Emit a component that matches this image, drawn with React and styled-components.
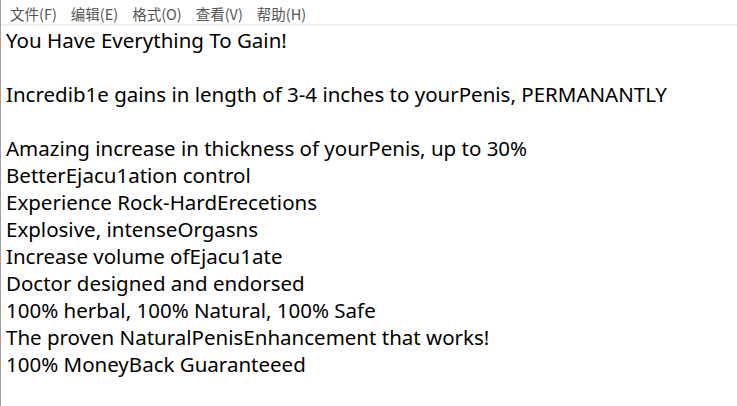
import React from 'react'
import styled, { createGlobalStyle } from 'styled-components'

const GlobalStyle = createGlobalStyle`
  html, body {
    margin: 0;
    padding: 0;
    background: #ffffff;
  }
`

const Window = styled.div`
  width: 737px;
  height: 406px;
  display: flex;
  flex-direction: column;
  background: #ffffff;
  border-left: 1px solid #a0a0a0;
  box-sizing: border-box;
  overflow: hidden;
`

const MenuBar = styled.nav`
  height: 24px;
  display: flex;
  align-items: center;
  padding: 2px 0 0 9px;
  box-sizing: border-box;
  border-bottom: 2px solid #f0f0f0;
  height: 26px;
  font-family: "Noto Sans CJK SC", "Noto Sans", sans-serif;
  font-size: 14.5px;
  color: #555555;
`

const MenuItem = styled.span`
  margin-right: 14px;
  white-space: nowrap;
`

const Editor = styled.div`
  flex: 1;
  padding: 1px 0 0 5px;
  font-family: "Noto Sans", "Open Sans", sans-serif;
  font-size: 20.5px;
  line-height: 27px;
  color: #000000;
  white-space: pre;
`

const Line = styled.div`
  height: 27px;
`

const menu = ['文件(F)', '编辑(E)', '格式(O)', '查看(V)', '帮助(H)']

const lines = [
  'You Have Everything To Gain!',
  '',
  'Incredib1e gains in length of 3-4 inches to yourPenis, PERMANANTLY',
  '',
  'Amazing increase in thickness of yourPenis, up to 30%',
  'BetterEjacu1ation control',
  'Experience Rock-HardErecetions',
  'Explosive, intenseOrgasns',
  'Increase volume ofEjacu1ate',
  'Doctor designed and endorsed',
  '100% herbal, 100% Natural, 100% Safe',
  'The proven NaturalPenisEnhancement that works!',
  '100% MoneyBack Guaranteeed',
]

export default function App() {
  return (
    <>
      <GlobalStyle />
      <Window>
        <MenuBar>
          {menu.map(m => <MenuItem key={m}>{m}</MenuItem>)}
        </MenuBar>
        <Editor>
          {lines.map((l, i) => <Line key={i}>{l}</Line>)}
        </Editor>
      </Window>
    </>
  )
}
